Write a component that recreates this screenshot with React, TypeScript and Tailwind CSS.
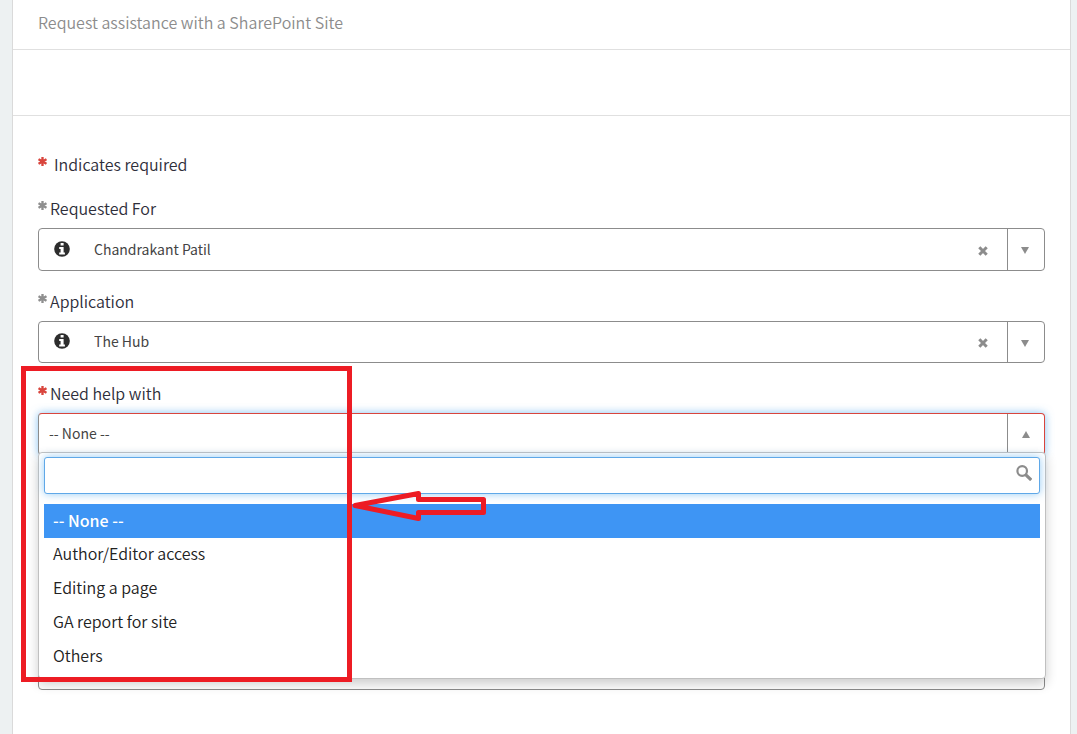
import React, { useState } from 'react';

const OPTIONS = ['-- None --', 'Author/Editor access', 'Editing a page', 'GA report for site', 'Others'];

const Asterisk = ({ className }: { className: string }) => (
  <svg viewBox="0 0 10 10" className={`size-[9px] shrink-0 ${className}`} aria-hidden="true">
    <path
      d="M5 0v10M0.6 2.4l8.8 5.2M9.4 2.4L0.6 7.6"
      stroke="currentColor"
      strokeWidth="2.6"
      fill="none"
    />
  </svg>
);

const InfoIcon = () => (
  <svg viewBox="0 0 16 16" className="size-4" aria-hidden="true">
    <circle cx="8" cy="8" r="7.8" fill="#2d2d2d" />
    <path d="M6.6 2h3v2.6h-3zM5.2 6h4.4v5.4h1.3V13.4H5.2V11.4h1.4V8H5.2z" fill="#fff" />
  </svg>
);

const Caret = ({ up = false }: { up?: boolean }) => (
  <svg viewBox="0 0 8 7" className="h-[7px] w-2" aria-hidden="true">
    <path d={up ? 'M4 0L8 7H0z' : 'M0 0h8L4 7z'} fill="#8c8c8c" />
  </svg>
);

interface FieldLabelProps {
  htmlFor: string;
  required?: boolean;
  children: React.ReactNode;
}

const FieldLabel = ({ htmlFor, required = false, children }: FieldLabelProps) => (
  <label htmlFor={htmlFor} className="mb-2 flex h-6 gap-[3px] text-base font-[350] leading-6">
    <Asterisk className={`mt-[5px] ${required ? 'text-[#d9453d]' : 'text-[#8f8f8f]'}`} />
    <span>{children}</span>
  </label>
);

interface ReferenceFieldProps {
  id: string;
  label: string;
  value: string;
  boxClass: string;
}

const ReferenceField = ({ id, label, value, boxClass }: ReferenceFieldProps) => (
  <div className="mb-[18px]">
    <FieldLabel htmlFor={id}>{label}</FieldLabel>
    <div className={`flex items-stretch rounded border border-[#8c8c8c] bg-white ${boxClass}`}>
      <button type="button" aria-label="More information" className="pb-0.5 pl-[15px] pr-6">
        <InfoIcon />
      </button>
      <select
        id={id}
        defaultValue={value}
        className="min-w-0 flex-1 appearance-none bg-transparent pb-0.5 text-sm text-[#444] outline-none"
      >
        <option>{value}</option>
      </select>
      <button type="button" aria-label="Clear" className="pl-[18px] pr-[19px] pt-0.5">
        <svg viewBox="0 0 10 10" className="size-2.5" aria-hidden="true">
          <path d="M1.3 1.3l7.4 7.4M8.7 1.3L1.3 8.7" stroke="#8c8c8c" strokeWidth="3" />
        </svg>
      </button>
      <span className="flex w-[37px] items-center justify-center border-l border-[#8c8c8c] pr-0.5 pt-0.5">
        <Caret />
      </span>
    </div>
  </div>
);

const HelpField = () => {
  const [selected, setSelected] = useState(OPTIONS[0]);
  const [query, setQuery] = useState('');

  return (
    <div className="relative mb-[50px]">
      <FieldLabel htmlFor="help" required>Need help with</FieldLabel>
      <button
        id="help"
        type="button"
        aria-haspopup="listbox"
        aria-expanded="true"
        className="flex h-[42px] w-full items-stretch rounded border border-[#d9453d] border-l-[#8c8c8c] bg-white text-left shadow-[0_0_8px_rgba(82,168,236,0.7)] outline-none"
      >
        <span className="flex-1 pl-2.5 text-sm leading-[38px] text-[#444]">{selected}</span>
        <span className="flex w-[37px] items-center justify-center border-l border-[#8c8c8c]">
          <Caret up />
        </span>
      </button>

      <div className="absolute -right-px left-0 top-[71px] z-10 rounded border border-[#c0c0c0] bg-white px-[5px] pb-1 pt-1 shadow-[0_5px_12px_rgba(0,0,0,0.2)]">
        <div className="flex h-[37px] items-center rounded-[3px] border border-[#5fa8e8] bg-white pr-[7px] shadow-[0_0_8px_rgba(82,168,236,0.6)]">
          <input
            type="text"
            aria-label="Search options"
            value={query}
            onChange={(e) => setQuery(e.target.value)}
            className="h-full min-w-0 flex-1 bg-transparent px-2 text-sm outline-none"
          />
          <svg viewBox="0 0 16 16" className="mb-1.5 size-4" fill="none" stroke="#8c8c8c" aria-hidden="true">
            <circle cx="6.2" cy="6" r="4.8" strokeWidth="2.2" />
            <path d="M9.6 9.6l5.6 5.4" strokeWidth="3.2" />
          </svg>
        </div>
        <ul role="listbox" aria-label="Need help with" className="mt-2.5">
          {OPTIONS.filter((o) => o.toLowerCase().includes(query.toLowerCase())).map((option) => (
            <li
              key={option}
              role="option"
              aria-selected={option === selected}
              onClick={() => setSelected(option)}
              className={`h-[34px] cursor-pointer pl-[9px] text-base ${
                option === selected
                  ? 'bg-[#3e95f4] font-medium leading-8 text-white'
                  : 'font-[350] leading-[30px] text-[#222]'
              }`}
            >
              {option}
            </li>
          ))}
        </ul>
      </div>
    </div>
  );
};

const Annotation = () => (
  <div className="pointer-events-none absolute left-[21px] top-[366px] z-20 h-[316px] w-[331px] border-[5px] border-[#ed1c24]">
    <svg
      viewBox="0 0 138 32"
      className="absolute left-[324px] top-[119px] h-8 w-[138px] max-w-none"
      fill="none"
      stroke="#ed1c24"
      strokeWidth="5"
      aria-hidden="true"
    >
      <path d="M5 15.5L68.5 3.5V9.5H133.5V22.5H68.5V28.5L5 15.5z" strokeLinejoin="round" />
    </svg>
  </div>
);

export default function App() {
  return (
    <div className="relative min-h-screen overflow-hidden bg-[#edf1f2] pl-3 pr-1.5 font-['Noto_Sans_CJK_SC','Noto_Sans',sans-serif] text-[#2e2e3a]">
      <main className="min-h-screen border-x border-[#dadada] bg-white">
        <header className="border-b border-[#e0e0e0] px-[25px] pb-[15px] pt-2.5">
          <h1 className="text-base font-[350] leading-6 text-[#8c8c8c]">Request assistance with a SharePoint Site</h1>
        </header>
        <div className="h-[66px] border-b border-[#e0e0e0]" />

        <form className="px-[25px] pt-9" onSubmit={(e) => e.preventDefault()}>
          <p className="mb-5 flex gap-[7px] text-base font-[350] leading-6">
            <Asterisk className="mt-[5px] text-[#d9453d]" />
            <span>Indicates required</span>
          </p>
          <ReferenceField id="requested-for" label="Requested For" value="Chandrakant Patil" boxClass="h-[43px]" />
          <ReferenceField id="application" label="Application" value="The Hub" boxClass="h-[42px]" />
          <HelpField />
          <textarea
            aria-label="Details"
            className="block h-[185px] w-full resize-none rounded border border-[#8c8c8c] bg-white p-2 text-sm outline-none"
          />
        </form>
      </main>
      <Annotation />
    </div>
  );
}
